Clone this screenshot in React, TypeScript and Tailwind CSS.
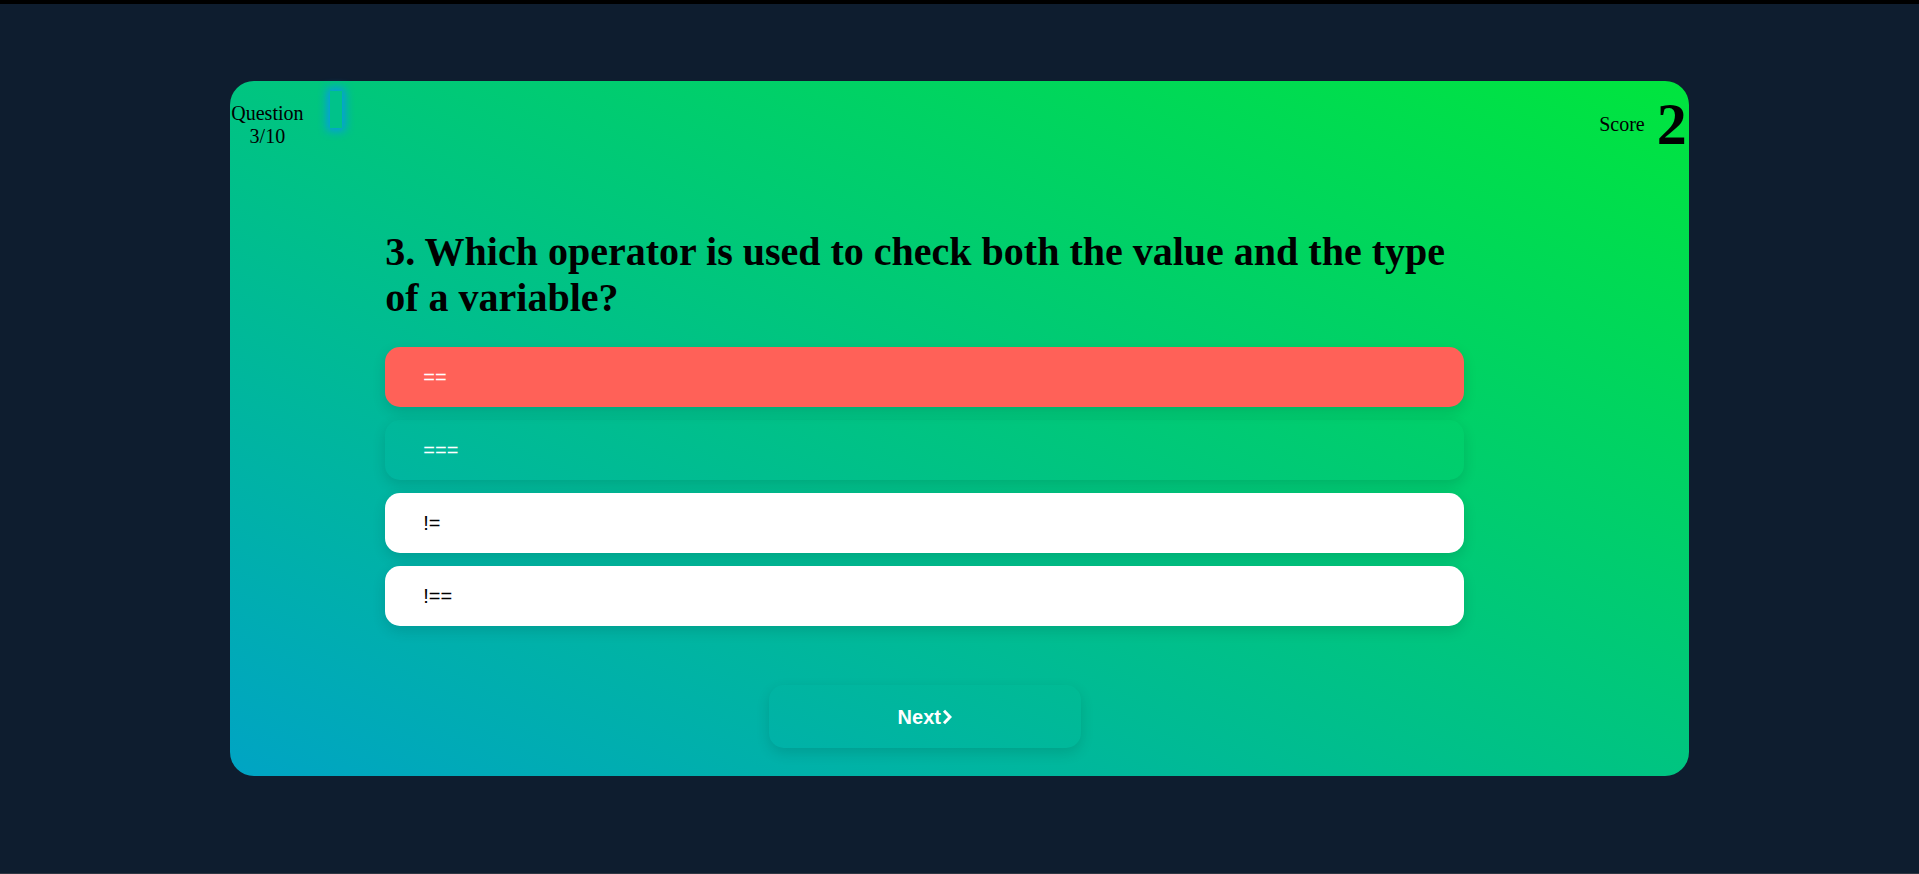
import React, { FC, useState } from "react";

interface Option {
  id: number;
  label: string;
  state: "wrong" | "correct" | "idle";
}

const options: Array<Option> = [
  { id: 1, label: "==", state: "wrong" },
  { id: 2, label: "===", state: "correct" },
  { id: 3, label: "!=", state: "idle" },
  { id: 4, label: "!==", state: "idle" },
];

const serif = "font-['Liberation_Serif','Times_New_Roman',serif]";
const sans = "font-['Liberation_Sans',Arial,sans-serif]";

const optionClass = (state: Option["state"]) => {
  if (state === "wrong") return "bg-[#ff6158] text-white";
  if (state === "correct") return "bg-transparent text-white";
  return "bg-white text-black";
};

const Quiz: FC = () => {
  const [score] = useState<number>(2);
  const [current] = useState<number>(3);

  return (
    <div className="h-screen w-full bg-[#0e1d2f] border-t-4 border-black border-b border-b-[#2f3742] overflow-hidden">
      <div className="mx-auto mt-[77px] w-[76%] h-[695px] rounded-[24px] bg-[linear-gradient(to_top_right,#00a4c4,#00e53d)] flex flex-col">
        {/* header */}
        <div className="flex justify-between items-start h-[80px]">
          <div className="flex items-start">
            <div className={`${serif} mt-[21px] ml-[1px] text-[20px] text-center text-black leading-[23px]`}>
              <p>Question</p>
              <p>{current}/10</p>
            </div>
            <div className="ml-[26px] mt-[10px] w-[12px] h-[37px] bg-[#00c28a] shadow-[0_0_10px_3px_#0898e8]" />
          </div>
          <div className={`${serif} flex items-center mt-[9px] pr-[2px] text-black`}>
            <span className="text-[20px] leading-[23px]">Score</span>
            <span className="ml-[12px] text-[60px] font-bold leading-[69px]">{score}</span>
          </div>
        </div>

        {/* question */}
        <div className="ml-[155px] w-[1079px] flex flex-col">
          <h2 className={`${serif} mt-[68px] text-[40px] font-bold leading-[46px] text-black`}>
            {current}. Which operator is used to check both the value and the type of a variable?
          </h2>

          <ul className="mt-[26px] flex flex-col gap-[13px]">
            {options.map((opt) => (
              <li
                key={opt.id}
                className={`${sans} ${optionClass(opt.state)} h-[60px] rounded-[15px] pl-[38px] flex items-center text-[20px] shadow-[0_5px_14px_rgba(0,0,0,0.12)]`}
              >
                {opt.label}
              </li>
            ))}
          </ul>

          <button
            className={`${sans} self-center mt-[59px] w-[312px] h-[63px] rounded-[15px] shadow-[0_5px_14px_rgba(0,0,0,0.12)] flex items-center justify-center text-white text-[20px] font-bold`}
          >
            Next
            <svg width="10" height="16" viewBox="0 0 10 16" className="ml-[1px] mt-[1px]">
              <polyline points="2,1.8 8,8 2,14.2" fill="none" stroke="white" strokeWidth="3" />
            </svg>
          </button>
        </div>
      </div>
    </div>
  );
};

export default function App() {
  return <Quiz />;
}
